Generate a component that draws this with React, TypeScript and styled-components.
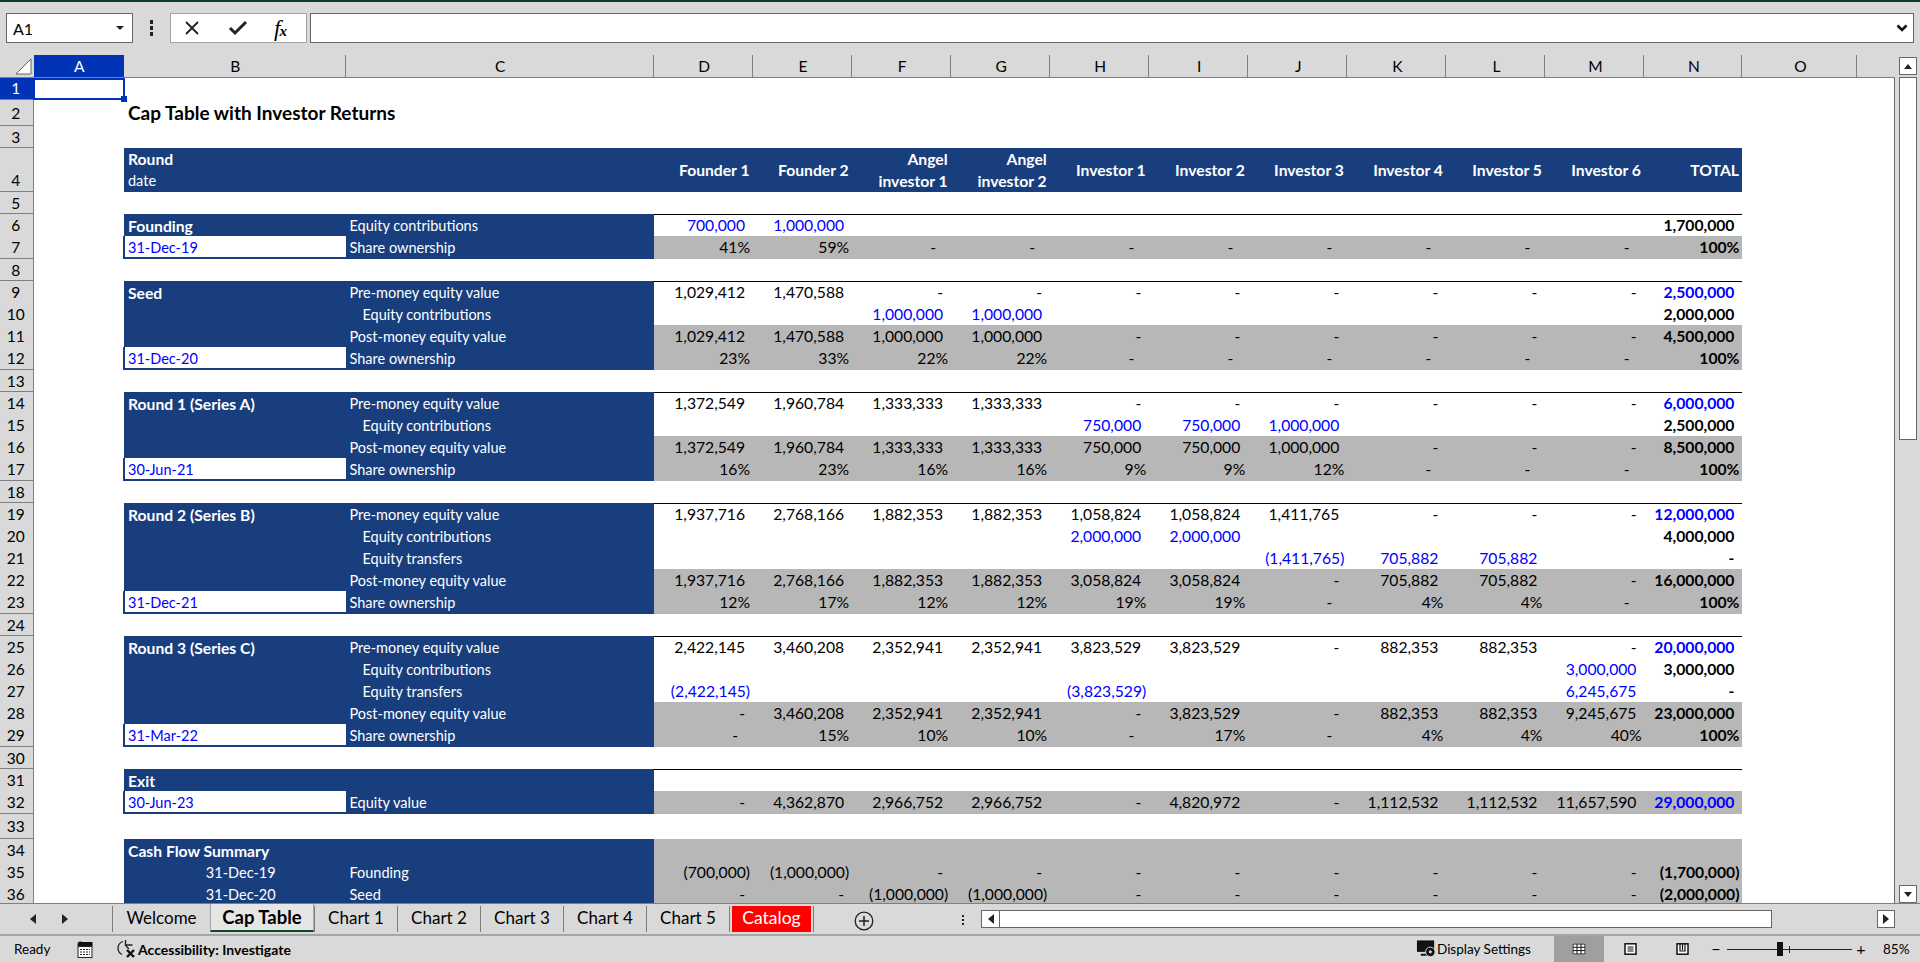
import React from 'react';
import styled, { createGlobalStyle } from 'styled-components';

const FONT = `Lato, 'Noto Sans', sans-serif`;
const SHEET_COLUMNS = '33.5px 90.5px 221.5px 308.5px repeat(10, 99.05px) 98px 115px 1fr';
const NAVY = '#193e7e';
const GREY = '#b7b7b7';
const CHROME = '#d9d9d9';
const LINE = '#7f7f7f';

const GlobalStyle = createGlobalStyle`
  html, body {
    margin: 0;
    padding: 0;
    background: ${CHROME};
  }
  * {
    box-sizing: border-box;
  }
`;

const Page = styled.div`
  width: 1920px;
  height: 962px;
  overflow: hidden;
  display: flex;
  flex-direction: column;
  font-family: ${FONT};
  font-size: 14.5px;
  color: #000;
  background: ${CHROME};
`;

const FormulaBar = styled.div`
  height: 55px;
  flex: none;
  display: flex;
  align-items: flex-start;
  padding: 11px 6px 0 6px;
  border-top: 2px solid #0c3d21;
`;

const NameBox = styled.div`
  width: 127px;
  height: 30px;
  background: #fff;
  border: 1px solid #666;
  display: flex;
  align-items: center;
  justify-content: space-between;
  padding: 0 8px 0 6px;
  font-size: 16px;
`;

const DropCaret = styled.span`
  width: 0;
  height: 0;
  border-left: 4px solid transparent;
  border-right: 4px solid transparent;
  border-top: 4px solid #222;
`;

const GripDots = styled.div`
  width: 37px;
  height: 30px;
  display: flex;
  flex-direction: column;
  align-items: center;
  justify-content: center;
  gap: 2.5px;
  span {
    width: 3.5px;
    height: 3.5px;
    background: #222;
  }
`;

const FormulaButtons = styled.div`
  width: 137px;
  height: 30px;
  background: #fff;
  border: 1px solid #a6a6a6;
  display: flex;
  align-items: center;
  padding-left: 13px;
  margin-right: 3px;
`;

const CrossSlot = styled.span`
  display: flex;
  margin-right: 28px;
`;

const CheckSlot = styled.span`
  display: flex;
  margin-right: 26px;
`;

const FxLabel = styled.span`
  font-family: 'Liberation Serif', serif;
  font-style: italic;
  font-size: 23px;
  line-height: 1;
  small {
    font-size: 15px;
    font-weight: 700;
    margin-left: -1px;
  }
`;

const FormulaInput = styled.div`
  flex: 1;
  height: 30px;
  background: #fff;
  border: 1px solid #666;
  display: flex;
  align-items: center;
  justify-content: flex-end;
  padding-right: 5px;
`;

const SheetArea = styled.div`
  height: 848px;
  flex: none;
  display: flex;
`;

const SheetFrame = styled.div`
  width: 1895px;
  flex: none;
  display: flex;
  flex-direction: column;
  overflow: hidden;
`;

const ColumnHeads = styled.div`
  height: 22.5px;
  flex: none;
  display: grid;
  grid-template-columns: ${SHEET_COLUMNS};
  border-bottom: 1px solid ${LINE};
`;

const Corner = styled.div`
  display: flex;
  align-items: flex-end;
  justify-content: flex-end;
  padding: 0 2px 2px 0;
`;

const ColumnHead = styled.div<{ $active?: boolean }>`
  display: flex;
  align-items: center;
  justify-content: center;
  padding-left: 2px;
  font-size: 15.5px;
  color: ${(p) => (p.$active ? '#fff' : '#000')};
  background: ${(p) => (p.$active ? '#0033b5' : 'transparent')};
  border-right: 1px solid ${(p) => (p.$active ? '#0033b5' : LINE)};
`;

const Rows = styled.div`
  position: relative;
  flex: 1;
  background: #fff;
  border-right: 1px solid #666;
  overflow: hidden;
`;

const SheetRow = styled.div<{ $h: number }>`
  height: ${(p) => p.$h}px;
  display: grid;
  grid-template-columns: ${SHEET_COLUMNS};
`;

const RowHead = styled.div<{ $active?: boolean }>`
  display: flex;
  align-items: center;
  justify-content: center;
  padding-right: 1px;
  padding-top: ${(p) => (p.$active ? 0 : 1)}px;
  align-self: stretch;
  font-size: 15.5px;
  color: ${(p) => (p.$active ? '#fff' : '#000')};
  background: ${(p) => (p.$active ? '#0033b5' : CHROME)};
  border-right: 1px solid ${LINE};
  border-bottom: 1px solid ${LINE};
  &[data-tall='true'] {
    align-items: flex-end;
    padding-bottom: 2px;
  }
`;

const Selection = styled.div`
  position: absolute;
  left: 32.5px;
  top: 0;
  width: 92.5px;
  height: 22.5px;
  border: 2px solid #0033b5;
  &::after {
    content: '';
    position: absolute;
    right: -4px;
    bottom: -4px;
    width: 6px;
    height: 6px;
    background: #0033b5;
  }
`;

const TitleCell = styled.div`
  grid-column: 3 / span 2;
  display: flex;
  align-items: center;
  padding-left: 4px;
  font-size: 19px;
  font-weight: 700;
  white-space: nowrap;
`;

const Spacer = styled.div``;

const BandCell = styled.div<{ $bold?: boolean; $indent?: boolean }>`
  background: ${NAVY};
  color: #fff;
  line-height: 22px;
  padding-top: 1px;
  white-space: nowrap;
  font-size: ${(p) => (p.$bold ? 15.7 : 14.5)}px;
  font-weight: ${(p) => (p.$bold ? 700 : 400)};
  padding-left: ${(p) => (p.$indent ? 17 : 4)}px;
`;

const HeadLabel = styled.div`
  background: ${NAVY};
  color: #fff;
  padding-left: 4px;
  line-height: 22px;
  div:first-child {
    font-size: 15.7px;
    font-weight: 700;
  }
`;

const HeadValue = styled.div`
  background: ${NAVY};
  color: #fff;
  font-size: 15.7px;
  font-weight: 700;
  line-height: 22px;
  display: flex;
  align-items: center;
  justify-content: flex-end;
  text-align: right;
  padding-right: 3.5px;
  white-space: pre-line;
`;

const DateCell = styled.div`
  background: #fff;
  color: #0000ff;
  display: flex;
  align-items: center;
  white-space: nowrap;
  margin-left: -1px;
  padding: 2px 0 0 3px;
  border: 2px solid ${NAVY};
  border-top-width: 0;
  border-right-width: 0;
`;

const SummaryDate = styled.div`
  background: ${NAVY};
  color: #fff;
  display: flex;
  align-items: center;
  justify-content: center;
  padding: 1px 0 0 12px;
`;

const ValueCell = styled.div<{
  $fill?: boolean;
  $bold?: boolean;
  $blue?: boolean;
  $top?: boolean;
  $pad: number;
}>`
  display: flex;
  align-items: center;
  justify-content: flex-end;
  white-space: nowrap;
  font-size: 15.7px;
  padding-right: ${(p) => p.$pad}px;
  background: ${(p) => (p.$fill ? GREY : '#fff')};
  font-weight: ${(p) => (p.$bold ? 700 : 400)};
  color: ${(p) => (p.$blue ? '#0000ff' : '#000')};
  box-shadow: ${(p) => (p.$top ? 'inset 0 1px 0 #000' : 'none')};
`;

const VScroll = styled.div`
  flex: 1;
  display: flex;
  flex-direction: column;
  padding: 2px 3px 0 3.5px;
  height: 848px;
`;

const ScrollButton = styled.div`
  height: 18px;
  flex: none;
  background: #fff;
  border: 1px solid #666;
  display: flex;
  align-items: center;
  justify-content: center;
`;

const ScrollThumb = styled.div`
  height: 363px;
  flex: none;
  margin-top: 2px;
  background: #fff;
  border: 1px solid #666;
`;

const ScrollTrack = styled.div`
  flex: 1;
`;

const TabBar = styled.div`
  height: 33px;
  flex: none;
  display: flex;
  align-items: flex-start;
  border-top: 1px solid ${LINE};
  border-bottom: 2px solid #a6a6a6;
`;

const TabNav = styled.div`
  width: 112px;
  height: 28px;
  display: flex;
  align-items: center;
  justify-content: center;
  gap: 26px;
  padding-right: 15px;
  margin-top: 1px;
`;

const Tab = styled.div<{ $width: number; $active?: boolean; $red?: boolean }>`
  width: ${(p) => p.$width}px;
  height: ${(p) => (p.$active ? 28 : 26)}px;
  margin-top: ${(p) => (p.$active ? 0 : 2)}px;
  flex: none;
  display: flex;
  align-items: center;
  justify-content: center;
  padding-bottom: ${(p) => (p.$active || p.$red ? 0 : 3)}px;
  font-size: ${(p) => (p.$active ? 18.5 : 17)}px;
  font-weight: ${(p) => (p.$active ? 700 : 400)};
  color: ${(p) => (p.$red ? '#fff' : '#000')};
  background: ${(p) => (p.$active ? '#e6e6e6' : 'transparent')};
  border-left: 1px solid ${(p) => (p.$active ? '#a6a6a6' : LINE)};
  border-right: ${(p) => (p.$active ? '1px solid #a6a6a6' : '0')};
  border-bottom: ${(p) => (p.$active ? '2px solid #0c4a26' : '0')};
`;

const RedLabel = styled.span`
  width: 100%;
  height: 100%;
  margin: 0 2px;
  padding-bottom: 3px;
  display: flex;
  align-items: center;
  justify-content: center;
  font-size: 17.5px;
  background: #ff0000;
`;

const TabEnd = styled.div`
  width: 1px;
  height: 26px;
  margin-top: 2px;
  background: ${LINE};
  flex: none;
`;

const AddSheet = styled.div`
  width: 140px;
  flex: none;
  height: 30px;
  display: flex;
  align-items: center;
  justify-content: center;
  padding-right: 40px;
  padding-top: 4px;
`;

const TabGrip = styled(GripDots)`
  width: 18px;
  height: 30px;
  margin-top: 1px;
  gap: 1.5px;
  span {
    width: 2.5px;
    height: 2.5px;
  }
`;

const HScroll = styled.div`
  width: 791px;
  height: 18px;
  margin: 6px 105px 0 9px;
  flex: none;
  display: flex;
  background: #fff;
  border: 1px solid #666;
`;

const HScrollEnd = styled.div`
  width: 18px;
  height: 100%;
  flex: none;
  display: flex;
  align-items: center;
  justify-content: center;
  border-right: 1px solid #666;
`;

const HScrollRight = styled(ScrollButton)`
  width: 18px;
  margin-top: 6px;
`;

const StatusBar = styled.div`
  height: 26px;
  flex: none;
  display: flex;
  align-items: center;
  font-size: 13.5px;
`;

const ReadyText = styled.span`
  margin-left: 14px;
  width: 59px;
`;

const IconSlot = styled.div<{ $width: number }>`
  width: ${(p) => p.$width}px;
  height: 100%;
  flex: none;
  display: flex;
  align-items: center;
  justify-content: center;
`;

const AccessSlot = styled(IconSlot)`
  margin-left: 20px;
`;

const AccessText = styled.span`
  font-weight: 700;
  font-size: 14px;
  white-space: nowrap;
  width: 1278px;
`;

const DisplayText = styled.span`
  width: 117px;
  white-space: nowrap;
`;

const ViewButton = styled.div<{ $active?: boolean }>`
  width: ${(p) => (p.$active ? 50 : 52)}px;
  height: 100%;
  flex: none;
  display: flex;
  align-items: center;
  justify-content: center;
  background: ${(p) => (p.$active ? '#9f9f9f' : 'transparent')};
`;

const ZoomSign = styled.span`
  width: 16px;
  text-align: center;
  font-size: 16px;
  line-height: 1;
`;

const ZoomTrack = styled.div`
  position: relative;
  width: 125px;
  height: 1px;
  background: #222;
  flex: none;
  margin: 0 1px 0 3px;
`;

const ZoomThumb = styled.div`
  position: absolute;
  left: 50px;
  top: -7px;
  width: 6px;
  height: 14px;
  background: #111;
`;

const ZoomTick = styled.div`
  position: absolute;
  left: 62px;
  top: -3px;
  width: 1px;
  height: 7px;
  background: #222;
`;

const ZoomValue = styled.span`
  margin-left: 14px;
  font-size: 13.5px;
`;

interface RowData {
  n: number;
  h: number;
  label?: string;
  labelBold?: boolean;
  date?: string;
  summaryDate?: string;
  text?: string;
  indent?: boolean;
  values?: string;
  total?: string;
  fill?: boolean;
  pct?: boolean;
  top?: boolean;
  input?: boolean;
  totalInput?: boolean;
}

const HEADERS = [
  'Founder 1',
  'Founder 2',
  'Angel\ninvestor 1',
  'Angel\ninvestor 2',
  'Investor 1',
  'Investor 2',
  'Investor 3',
  'Investor 4',
  'Investor 5',
  'Investor 6',
  'TOTAL',
];

const COLUMN_LETTERS = 'ABCDEFGHIJKLMNO'.split('');

// values are space separated, one per column D to M, a dot is an empty cell
const DATA: RowData[] = [
  { n: 6, h: 22, label: 'Founding', labelBold: true, text: 'Equity contributions', values: '700,000 1,000,000 . . . . . . . .', total: '1,700,000', top: true, input: true },
  { n: 7, h: 23, date: '31-Dec-19', text: 'Share ownership', values: '41% 59% - - - - - - - -', total: '100%', fill: true, pct: true },
  { n: 8, h: 22 },
  { n: 9, h: 22, label: 'Seed', labelBold: true, text: 'Pre-money equity value', values: '1,029,412 1,470,588 - - - - - - - -', total: '2,500,000', top: true, totalInput: true },
  { n: 10, h: 22, label: '', text: 'Equity contributions', indent: true, values: '. . 1,000,000 1,000,000 . . . . . .', total: '2,000,000', input: true },
  { n: 11, h: 22, label: '', text: 'Post-money equity value', values: '1,029,412 1,470,588 1,000,000 1,000,000 - - - - - -', total: '4,500,000', fill: true },
  { n: 12, h: 23, date: '31-Dec-20', text: 'Share ownership', values: '23% 33% 22% 22% - - - - - -', total: '100%', fill: true, pct: true },
  { n: 13, h: 22 },
  { n: 14, h: 22, label: 'Round 1 (Series A)', labelBold: true, text: 'Pre-money equity value', values: '1,372,549 1,960,784 1,333,333 1,333,333 - - - - - -', total: '6,000,000', top: true, totalInput: true },
  { n: 15, h: 22, label: '', text: 'Equity contributions', indent: true, values: '. . . . 750,000 750,000 1,000,000 . . .', total: '2,500,000', input: true },
  { n: 16, h: 22, label: '', text: 'Post-money equity value', values: '1,372,549 1,960,784 1,333,333 1,333,333 750,000 750,000 1,000,000 - - -', total: '8,500,000', fill: true },
  { n: 17, h: 23, date: '30-Jun-21', text: 'Share ownership', values: '16% 23% 16% 16% 9% 9% 12% - - -', total: '100%', fill: true, pct: true },
  { n: 18, h: 22 },
  { n: 19, h: 22, label: 'Round 2 (Series B)', labelBold: true, text: 'Pre-money equity value', values: '1,937,716 2,768,166 1,882,353 1,882,353 1,058,824 1,058,824 1,411,765 - - -', total: '12,000,000', top: true, totalInput: true },
  { n: 20, h: 22, label: '', text: 'Equity contributions', indent: true, values: '. . . . 2,000,000 2,000,000 . . . .', total: '4,000,000', input: true },
  { n: 21, h: 22, label: '', text: 'Equity transfers', indent: true, values: '. . . . . . (1,411,765) 705,882 705,882 .', total: '-', input: true },
  { n: 22, h: 22, label: '', text: 'Post-money equity value', values: '1,937,716 2,768,166 1,882,353 1,882,353 3,058,824 3,058,824 - 705,882 705,882 -', total: '16,000,000', fill: true },
  { n: 23, h: 23, date: '31-Dec-21', text: 'Share ownership', values: '12% 17% 12% 12% 19% 19% - 4% 4% -', total: '100%', fill: true, pct: true },
  { n: 24, h: 22 },
  { n: 25, h: 22, label: 'Round 3 (Series C)', labelBold: true, text: 'Pre-money equity value', values: '2,422,145 3,460,208 2,352,941 2,352,941 3,823,529 3,823,529 - 882,353 882,353 -', total: '20,000,000', top: true, totalInput: true },
  { n: 26, h: 22, label: '', text: 'Equity contributions', indent: true, values: '. . . . . . . . . 3,000,000', total: '3,000,000', input: true },
  { n: 27, h: 22, label: '', text: 'Equity transfers', indent: true, values: '(2,422,145) . . . (3,823,529) . . . . 6,245,675', total: '-', input: true },
  { n: 28, h: 22, label: '', text: 'Post-money equity value', values: '- 3,460,208 2,352,941 2,352,941 - 3,823,529 - 882,353 882,353 9,245,675', total: '23,000,000', fill: true },
  { n: 29, h: 23, date: '31-Mar-22', text: 'Share ownership', values: '- 15% 10% 10% - 17% - 4% 4% 40%', total: '100%', fill: true, pct: true },
  { n: 30, h: 22 },
  { n: 31, h: 22, label: 'Exit', labelBold: true, text: '', values: '. . . . . . . . . .', total: '', top: true },
  { n: 32, h: 23, date: '30-Jun-23', text: 'Equity value', values: '- 4,362,870 2,966,752 2,966,752 - 4,820,972 - 1,112,532 1,112,532 11,657,590', total: '29,000,000', fill: true, totalInput: true },
  { n: 33, h: 25 },
  { n: 34, h: 22, label: 'Cash Flow Summary', labelBold: true, text: '', values: '. . . . . . . . . .', total: '', fill: true },
  { n: 35, h: 22, summaryDate: '31-Dec-19', text: 'Founding', values: '(700,000) (1,000,000) - - - - - - - -', total: '(1,700,000)', fill: true },
  { n: 36, h: 22, summaryDate: '31-Dec-20', text: 'Seed', values: '- - (1,000,000) (1,000,000) - - - - - -', total: '(2,000,000)', fill: true },
];

const padFor = (value: string, pct?: boolean) => {
  if (value === '-' && pct) return 15;
  if (value.endsWith(')') || value.endsWith('%')) return 3;
  return 8;
};

const CheckIcon = () => (
  <svg width="20" height="16" viewBox="0 0 20 16">
    <path d="M2 8l5 5 11-11" fill="none" stroke="#222" strokeWidth="3" />
  </svg>
);

const CrossIcon = () => (
  <svg width="16" height="16" viewBox="0 0 16 16">
    <path d="M2 2l12 12M14 2L2 14" fill="none" stroke="#222" strokeWidth="1.8" />
  </svg>
);

const Triangle = ({ dir }: { dir: 'up' | 'down' | 'left' | 'right' }) => {
  const points = {
    up: '0,5 8,5 4,0',
    down: '0,0 8,0 4,5',
    left: '6,0 6,10 0,5',
    right: '0,0 0,10 6,5',
  }[dir];
  const w = dir === 'up' || dir === 'down' ? 8 : 6;
  const h = dir === 'up' || dir === 'down' ? 5 : 10;
  return (
    <svg width={w} height={h} viewBox={`0 0 ${w} ${h}`}>
      <polygon points={points} fill="#222" />
    </svg>
  );
};

const AddIcon = () => (
  <svg width="20" height="20" viewBox="0 0 20 20">
    <circle cx="10" cy="10" r="8.8" fill="none" stroke="#222" strokeWidth="1.3" />
    <path d="M10 5v10M5 10h10" stroke="#222" strokeWidth="1.5" />
  </svg>
);

const MacroIcon = () => (
  <svg width="16" height="17" viewBox="0 0 16 17">
    <circle cx="3.5" cy="3.5" r="3" fill="#111" />
    <rect x="5" y="1" width="10.5" height="4" fill="#111" />
    <rect x="1" y="5.5" width="14" height="11" fill="#fff" stroke="#222" />
    <path d="M3 8.5h10M3 11h10M3 13.5h10" stroke="#222" strokeDasharray="2 1" />
  </svg>
);

const AccessIcon = () => (
  <svg width="20" height="20" viewBox="0 0 20 20">
    <path d="M6 2.5A7 7 0 0 0 5 15.5" fill="none" stroke="#222" strokeWidth="1.3" />
    <path d="M8.5 1v6M8.5 6h7M9 7l3 3" fill="none" stroke="#222" strokeWidth="1.4" />
    <path d="M10 11l7 7M17 11l-7 7" stroke="#111" strokeWidth="2.4" />
  </svg>
);

const DisplayIcon = () => (
  <svg width="22" height="20" viewBox="0 0 22 20">
    <rect x="1" y="1" width="18" height="12" fill="#111" />
    <rect x="5" y="15" width="7" height="2" fill="#111" />
    <circle cx="15" cy="13" r="5" fill="#111" stroke="#d9d9d9" />
    <circle cx="15" cy="13" r="1.6" fill="#d9d9d9" />
  </svg>
);

const NormalViewIcon = () => (
  <svg width="14" height="12" viewBox="0 0 14 12">
    <rect x="0" y="0" width="14" height="12" fill="#e6e6e6" />
    <rect x="1" y="1" width="12" height="10" fill="#fff" stroke="#111" />
    <path d="M1 4.3h12M1 7.6h12M5 1v10M9 1v10" stroke="#111" />
  </svg>
);

const PageViewIcon = () => (
  <svg width="13" height="12" viewBox="0 0 13 12">
    <rect x="1" y="0.8" width="11" height="10.4" fill="#fff" stroke="#111" strokeWidth="1.5" />
    <path d="M3.5 4h6M3.5 6h6M3.5 8h6" stroke="#111" />
  </svg>
);

const BreakViewIcon = () => (
  <svg width="13" height="12" viewBox="0 0 13 12">
    <rect x="1" y="0.8" width="11" height="10.4" fill="#fff" stroke="#111" strokeWidth="1.5" />
    <path d="M6.5 1v6M4 1v7h5V1" fill="none" stroke="#111" strokeWidth="1.2" />
  </svg>
);

const SheetRowView: React.FC<{ row: RowData }> = ({ row }) => {
  const { n, h, label, labelBold, date, summaryDate, text, indent, values, total, fill, pct, top, input, totalInput } = row;
  if (values === undefined) {
    return (
      <SheetRow $h={h}>
        <RowHead>{n}</RowHead>
      </SheetRow>
    );
  }
  const cells = values.split(' ');
  return (
    <SheetRow $h={h}>
      <RowHead>{n}</RowHead>
      <Spacer />
      {date ? (
        <DateCell>{date}</DateCell>
      ) : summaryDate ? (
        <SummaryDate>{summaryDate}</SummaryDate>
      ) : (
        <BandCell $bold={labelBold}>{label}</BandCell>
      )}
      <BandCell $indent={indent}>{text}</BandCell>
      {cells.map((value, i) => {
        const shown = value === '.' ? '' : value;
        return (
          <ValueCell key={i} $fill={fill} $top={top} $blue={input} $pad={padFor(shown, pct)}>
            {shown}
          </ValueCell>
        );
      })}
      <ValueCell $fill={fill} $top={top} $bold $blue={totalInput} $pad={padFor(total || '', false)}>
        {total}
      </ValueCell>
    </SheetRow>
  );
};

const App: React.FC = () => {
  return (
    <Page>
      <GlobalStyle />
      <FormulaBar>
        <NameBox>
          A1
          <DropCaret />
        </NameBox>
        <GripDots>
          <span />
          <span />
          <span />
        </GripDots>
        <FormulaButtons>
          <CrossSlot>
            <CrossIcon />
          </CrossSlot>
          <CheckSlot>
            <CheckIcon />
          </CheckSlot>
          <FxLabel>
            f<small>x</small>
          </FxLabel>
        </FormulaButtons>
        <FormulaInput>
          <svg width="12" height="9" viewBox="0 0 12 9">
            <path d="M1.5 1.5L6 6l4.5-4.5" fill="none" stroke="#111" strokeWidth="2.6" />
          </svg>
        </FormulaInput>
      </FormulaBar>

      <SheetArea>
        <SheetFrame>
          <ColumnHeads>
            <Corner>
              <svg width="17" height="17" viewBox="0 0 17 17">
                <polygon points="1,16 16,16 16,1" fill="#fff" stroke="#666" />
              </svg>
            </Corner>
            {COLUMN_LETTERS.map((letter) => (
              <ColumnHead key={letter} $active={letter === 'A'}>
                {letter}
              </ColumnHead>
            ))}
          </ColumnHeads>
          <Rows>
            <SheetRow $h={22}>
              <RowHead $active>1</RowHead>
            </SheetRow>
            <SheetRow $h={26}>
              <RowHead>2</RowHead>
              <Spacer />
              <TitleCell>Cap Table with Investor Returns</TitleCell>
            </SheetRow>
            <SheetRow $h={22}>
              <RowHead>3</RowHead>
            </SheetRow>
            <SheetRow $h={44}>
              <RowHead data-tall="true">4</RowHead>
              <Spacer />
              <HeadLabel>
                <div>Round</div>
                <div>date</div>
              </HeadLabel>
              <HeadLabel />
              {HEADERS.map((title) => (
                <HeadValue key={title}>{title}</HeadValue>
              ))}
            </SheetRow>
            <SheetRow $h={22}>
              <RowHead>5</RowHead>
            </SheetRow>
            {DATA.map((row) => (
              <SheetRowView key={row.n} row={row} />
            ))}
            <Selection />
          </Rows>
        </SheetFrame>
        <VScroll>
          <ScrollButton>
            <Triangle dir="up" />
          </ScrollButton>
          <ScrollThumb />
          <ScrollTrack />
          <ScrollButton>
            <Triangle dir="down" />
          </ScrollButton>
        </VScroll>
      </SheetArea>

      <TabBar>
        <TabNav>
          <Triangle dir="left" />
          <Triangle dir="right" />
        </TabNav>
        <Tab $width={98}>Welcome</Tab>
        <Tab $width={104} $active>Cap Table</Tab>
        <Tab $width={83}>Chart 1</Tab>
        <Tab $width={83}>Chart 2</Tab>
        <Tab $width={83}>Chart 3</Tab>
        <Tab $width={83}>Chart 4</Tab>
        <Tab $width={83}>Chart 5</Tab>
        <Tab $width={84} $red>
          <RedLabel>Catalog</RedLabel>
        </Tab>
        <TabEnd />
        <AddSheet>
          <AddIcon />
        </AddSheet>
        <TabGrip>
          <span />
          <span />
          <span />
        </TabGrip>
        <HScroll>
          <HScrollEnd>
            <Triangle dir="left" />
          </HScrollEnd>
        </HScroll>
        <HScrollRight>
          <Triangle dir="right" />
        </HScrollRight>
      </TabBar>

      <StatusBar>
        <ReadyText>Ready</ReadyText>
        <IconSlot $width={23}>
          <MacroIcon />
        </IconSlot>
        <AccessSlot $width={22}>
          <AccessIcon />
        </AccessSlot>
        <AccessText>Accessibility: Investigate</AccessText>
        <IconSlot $width={21}>
          <DisplayIcon />
        </IconSlot>
        <DisplayText>Display Settings</DisplayText>
        <ViewButton $active>
          <NormalViewIcon />
        </ViewButton>
        <ViewButton>
          <PageViewIcon />
        </ViewButton>
        <ViewButton>
          <BreakViewIcon />
        </ViewButton>
        <ZoomSign>−</ZoomSign>
        <ZoomTrack>
          <ZoomThumb />
          <ZoomTick />
        </ZoomTrack>
        <ZoomSign>+</ZoomSign>
        <ZoomValue>85%</ZoomValue>
      </StatusBar>
    </Page>
  );
};

export default App;
